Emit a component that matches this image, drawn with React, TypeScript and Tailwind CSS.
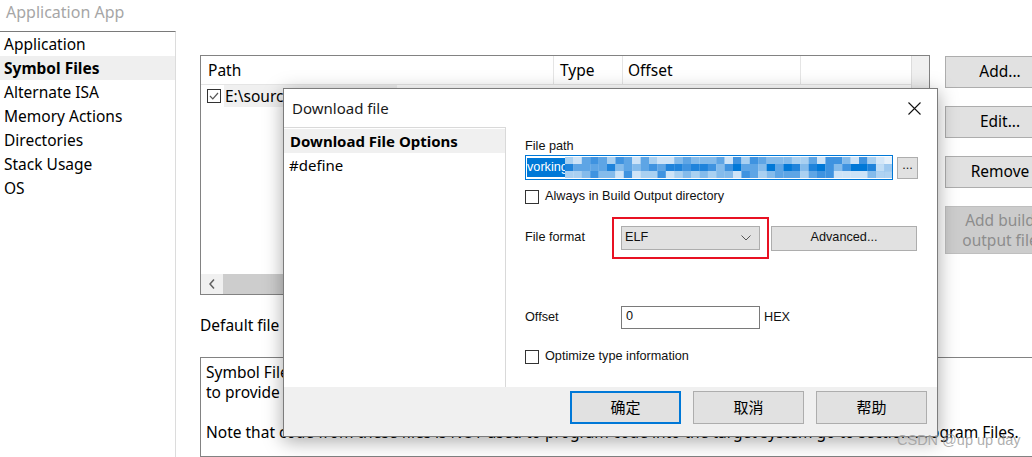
import React from "react";

const NAV = ["Application", "Symbol Files", "Alternate ISA", "Memory Actions", "Directories", "Stack Usage", "OS"];

/** Pixelated blur over the file path, drawn as a grid of blue squares */
function Mosaic() {
  const cols = 39;
  const rows = 3;
  const palette = ["#0078d7", "#1f83db", "#3f93e0", "#5ea5e5", "#84bbeb", "#a9d0f1", "#cde3f7"];
  let seed = 11;
  const rnd = () => {
    seed = (seed * 9301 + 49297) % 233280;
    return seed / 233280;
  };
  const cells: React.ReactNode[] = [];
  for (let r = 0; r < rows; r++) {
    for (let c = 0; c < cols; c++) {
      const v = rnd();
      const idx = r === 1 ? Math.floor(v * 5) : Math.floor(2 + v * 5);
      const fade = c > cols - 3 ? 0.5 : 1;
      cells.push(
        <rect key={`${r}-${c}`} x={c * 8.4} y={r * 7} width={8.6} height={7.2} fill={palette[idx]} opacity={fade} />
      );
    }
  }
  return (
    <svg width={cols * 8.4} height={21} className="block">
      {cells}
    </svg>
  );
}

function Box({ checked = false }: { checked?: boolean }) {
  return (
    <span className="w-[14px] h-[14px] shrink-0 border border-[#333333] bg-white flex items-center justify-center">
      {checked && (
        <svg width="10" height="8" viewBox="0 0 10 8">
          <path d="M1 4 L3.8 6.8 L9 1" fill="none" stroke="#555555" strokeWidth="1.2" />
        </svg>
      )}
    </span>
  );
}

function DownloadDialog() {
  return (
    <div className="absolute left-[283px] top-[88px] w-[655px] h-[349px] border border-[#7c7c7c] bg-white shadow-[0_4px_18px_rgba(0,0,0,0.35)] flex flex-col">
      {/* Title bar */}
      <div className="h-[38px] shrink-0 flex items-center justify-between pl-[8px] pr-[16px]">
        <span className="text-[15px] text-[#1a1a1a]">Download file</span>
        <svg width="13" height="13" viewBox="0 0 13 13">
          <path d="M0.5 0.5 L12.5 12.5 M12.5 0.5 L0.5 12.5" stroke="#111111" strokeWidth="1.1" />
        </svg>
      </div>

      {/* Body */}
      <div className="flex h-[260px] shrink-0">
        <div className="w-[222px] shrink-0 border-t border-r border-[#d9d9d9] pt-[1px]">
          <div className="h-[24px] leading-[24px] pl-[6px] bg-[#f0f0f0] font-bold text-[15px]">Download File Options</div>
          <div className="h-[24px] leading-[24px] pl-[5px] text-[15px]">#define</div>
        </div>

        <div className="flex-1 pl-[19px] pt-[12px] font-['Liberation_Sans',sans-serif] text-[12.7px] text-[#111111]">
          <div className="h-[15px] leading-[15px]">File path</div>
          <div className="mt-[1px] flex items-center gap-[4px]">
            <div className="w-[368px] h-[25px] border border-[#0078d7] bg-white flex items-center pl-[1px] overflow-hidden">
              <span className="bg-[#0078d7] text-white h-[19px] leading-[19px] pr-[2px] w-[38px] overflow-hidden whitespace-nowrap">vorking</span>
              <Mosaic />
            </div>
            <div className="w-[21px] h-[22px] bg-[#e1e1e1] border border-[#adadad] flex items-center justify-center leading-none pb-[4px]">...</div>
          </div>

          <div className="mt-[9px] flex items-center gap-[6px] h-[15px]">
            <Box />
            <span>Always in Build Output directory</span>
          </div>

          <div className="mt-[13px] flex items-center">
            <span className="w-[87px] shrink-0">File format</span>
            <div className="border-2 border-[#e81123] px-[7px] py-[7px]">
              <div className="w-[139px] h-[24px] bg-[#e1e1e1] border border-[#adadad] flex items-center justify-between pl-[3px] pr-[8px]">
                <span>ELF</span>
                <svg width="10" height="6" viewBox="0 0 10 6">
                  <path d="M0.5 0.5 L5 5 L9.5 0.5" fill="none" stroke="#555555" strokeWidth="1" />
                </svg>
              </div>
            </div>
            <div className="ml-[2px] w-[146px] h-[25px] bg-[#e1e1e1] border border-[#adadad] flex items-center justify-center">Advanced...</div>
          </div>

          <div className="mt-[47px] flex items-center">
            <span className="w-[96px] shrink-0 pt-[1px]">Offset</span>
            <div className="w-[139px] h-[23px] border border-[#7a7a7a] bg-white pl-[4px] leading-[19px]">0</div>
            <span className="ml-[4px]">HEX</span>
          </div>

          <div className="mt-[20px] flex items-center gap-[6px] h-[15px]">
            <Box />
            <span>Optimize type information</span>
          </div>
        </div>
      </div>

      {/* Footer */}
      <div className="flex-1 bg-[#f0f0f0] flex justify-end gap-[12px] pr-[10px] pt-[4px] font-['Noto_Sans_CJK_SC',sans-serif] text-[15px]">
        <div className="w-[111px] h-[33px] bg-[#e1e1e1] border-2 border-[#0078d7] flex items-center justify-center">确定</div>
        <div className="w-[111px] h-[33px] bg-[#e1e1e1] border border-[#adadad] flex items-center justify-center">取消</div>
        <div className="w-[111px] h-[33px] bg-[#e1e1e1] border border-[#adadad] flex items-center justify-center">帮助</div>
      </div>
    </div>
  );
}

export default function App() {
  return (
    <div className="relative w-[1032px] h-[457px] overflow-hidden bg-white text-black font-['Noto_Sans','Open_Sans',sans-serif]">
      <div className="h-[31px] pl-[6px] text-[16px] leading-[24px] text-[#a6a6a6]">Application App</div>

      <div className="flex h-[426px]">
        {/* Category list */}
        <nav className="w-[176px] shrink-0 border-t border-t-[#7a7a7a] border-r border-r-[#dcdcdc]">
          {NAV.map((item) => (
            <div
              key={item}
              className={
                item === "Symbol Files"
                  ? "h-[24px] leading-[24px] pl-[4px] text-[15.5px] font-bold bg-[#efefef]"
                  : "h-[24px] leading-[24px] pl-[4px] text-[15.5px]"
              }
            >
              {item}
            </div>
          ))}
        </nav>

        {/* Page */}
        <main className="flex-1 min-w-0 pl-[24px] pt-[24px] overflow-hidden flex flex-col">
          <div className="flex gap-[15px]">
            <div className="w-[730px] h-[240px] shrink-0 border border-[#828282] flex">
              <div className="flex-1 flex flex-col">
                <div className="h-[29px] flex text-[15.5px] border-b border-[#e5e5e5]">
                  <div className="w-[353px] pl-[7px] leading-[29px] border-r border-[#e5e5e5]">Path</div>
                  <div className="w-[69px] pl-[6px] leading-[29px] border-r border-[#e5e5e5]">Type</div>
                  <div className="w-[178px] pl-[5px] leading-[29px] border-r border-[#e5e5e5]">Offset</div>
                </div>
                <div className="h-[22px] flex items-center pl-[6px] gap-[3px] text-[15.5px]">
                  <Box checked />
                  <span className="bg-[#f0f0f0] pl-[1px] pr-[40px] leading-[22px]">E:\source\working</span>
                </div>
                <div className="flex-1" />
                <div className="h-[20px] flex items-stretch bg-[#f0f0f0]">
                  <div className="w-[22px] flex items-center justify-center">
                    <svg width="6" height="10" viewBox="0 0 6 10">
                      <path d="M5 0.5 L1 5 L5 9.5" fill="none" stroke="#606060" strokeWidth="1.5" />
                    </svg>
                  </div>
                  <div className="w-[300px] bg-[#cdcdcd]" />
                </div>
              </div>
              <div className="w-[18px] bg-[#f0f0f0] border-l border-[#dcdcdc]" />
            </div>

            <div className="w-[110px] shrink-0 flex flex-col gap-[18px] pt-[1px] text-[15.5px]">
              <div className="h-[32px] bg-[#e1e1e1] border border-[#adadad] flex items-center justify-center">Add...</div>
              <div className="h-[32px] bg-[#e1e1e1] border border-[#adadad] flex items-center justify-center">Edit...</div>
              <div className="h-[32px] bg-[#e1e1e1] border border-[#adadad] flex items-center justify-center">Remove</div>
              <div className="h-[48px] bg-[#cccccc] border border-[#bfbfbf] flex items-center justify-center text-center leading-[20px] text-[#8d8d8d]">
                Add build
                <br />
                output file
              </div>
            </div>
          </div>

          <div className="mt-[19px] text-[15.5px] leading-[22px] whitespace-nowrap">Default file type: ELF</div>

          <div className="mt-[21px] w-[900px] flex-1 border border-[#828282] pl-[5px] pt-[4px] text-[15.5px] leading-[20px] whitespace-nowrap">
            <div>Symbol Files contain debug information for the</div>
            <div>to provide source level debugging.</div>
            <div className="h-[20px]" />
            <div>Note that code from these files is NOT used to program code into the target system go to section Program Files.</div>
          </div>
        </main>
      </div>

      <DownloadDialog />

      <div className="absolute left-[897px] top-[430px] text-[14.5px] text-[#9a9a9a]/80 font-['Liberation_Sans',sans-serif]">CSDN @up up day</div>
    </div>
  );
}
